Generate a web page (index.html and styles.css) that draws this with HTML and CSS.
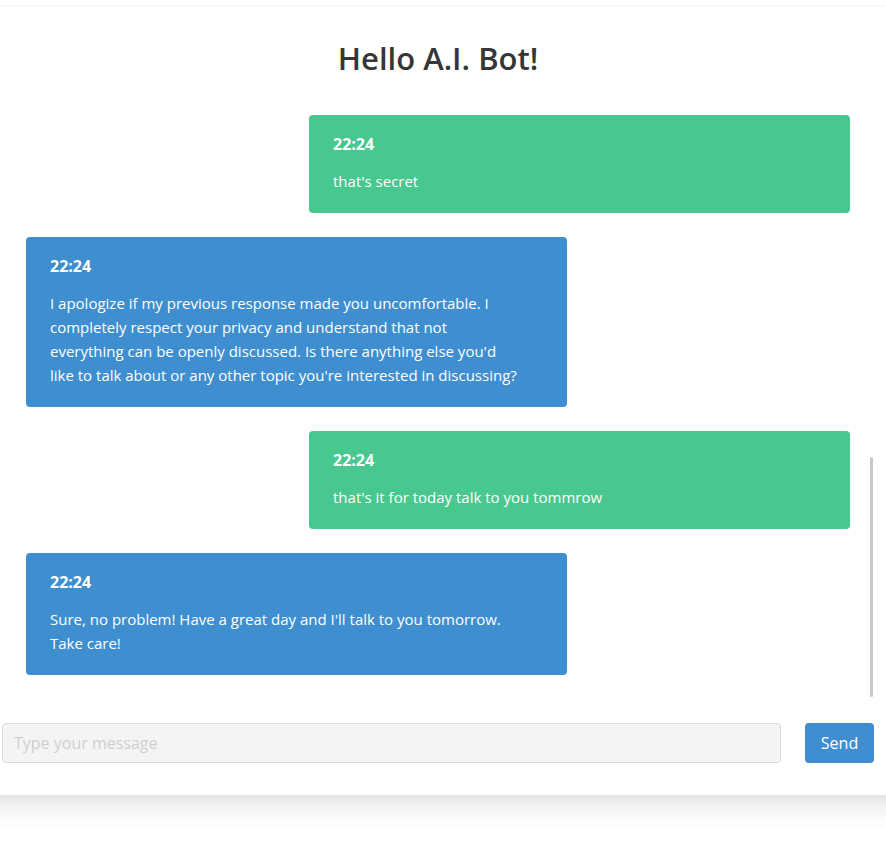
FILE: index.html
```html
<!DOCTYPE html>
<html lang="en">
<head>
<meta charset="utf-8">
<title>Hello A.I. Bot!</title>
<link rel="stylesheet" href="styles.css">
</head>
<body>
<div class="page">
  <section class="card">
    <h1 class="title">Hello A.I. Bot!</h1>
    <div class="chat">
      <div class="msg me">
        <p class="time">22:24</p>
        <p class="text">that's secret</p>
      </div>
      <div class="msg bot">
        <p class="time">22:24</p>
        <p class="text">I apologize if my previous response made you uncomfortable. I completely respect your privacy and understand that not everything can be openly discussed. Is there anything else you'd like to talk about or any other topic you're interested in discussing?</p>
      </div>
      <div class="msg me">
        <p class="time">22:24</p>
        <p class="text">that's it for today talk to you tommrow</p>
      </div>
      <div class="msg bot">
        <p class="time">22:24</p>
        <p class="text">Sure, no problem! Have a great day and I'll talk to you tomorrow. Take care!</p>
      </div>
      <div class="scroll-thumb"></div>
    </div>
    <form class="composer">
      <input class="input" type="text" placeholder="Type your message">
      <button class="send" type="button">Send</button>
    </form>
  </section>
</div>
</body>
</html>
```
FILE: styles.css
```css
* { box-sizing: border-box; }
html, body { margin: 0; padding: 0; background: #fff; }
body {
  font-family: "Open Sans", "Noto Sans", sans-serif;
  font-size: 15px;
  color: #4a4a4a;
  min-height: 843px;
}
.page { padding-top: 6px; }
.card {
  position: relative;
  background: #fff;
  box-shadow: 0 0 0 1px rgba(10,10,10,0.04);
  padding: 34px 12px 32px 2px;
}
.card::after {
  content: "";
  position: absolute;
  left: 0;
  right: 0;
  top: 100%;
  height: 36px;
  background: linear-gradient(to bottom, #e4e4e4 0, #f1f1f1 10px, #fbfbfb 24px, #fff 36px);
  pointer-events: none;
}
.title {
  margin: 0 0 25px;
  text-align: center;
  font-size: 31px;
  line-height: 36px;
  font-weight: 600;
  color: #363636;
}
.chat {
  position: relative;
  display: flex;
  flex-direction: column;
  gap: 24px;
  padding: 14px 24px 24px;
}
.msg {
  width: 541px;
  border-radius: 4px;
  color: #fff;
  padding: 20px 44px 20px 24px;
}
.msg.me { align-self: flex-end; background: #48c78e; }
.msg.bot { align-self: flex-start; background: #3e8ed0; }
.msg p { margin: 0; line-height: 24px; }
.msg .time { font-weight: 700; font-size: 16px; line-height: 18px; margin-bottom: 16px; }
.text { font-size: 15px; }
.scroll-thumb {
  position: absolute;
  right: 1px;
  top: 356px;
  width: 3px;
  height: 240px;
  border-radius: 2px;
  background: #c8c8c8;
}
.composer {
  display: flex;
  gap: 24px;
  margin: 24px 0 0;
}
.input {
  flex: 1;
  height: 40px;
  border: 1px solid #dbdbdb;
  border-radius: 4px;
  background: #f4f4f4;
  padding: 0 11px;
  font-family: inherit;
  font-size: 16px;
  color: #363636;
  outline: none;
}
.input::placeholder { color: #cfcfcf; }
.send {
  width: 69px;
  height: 40px;
  border: none;
  border-radius: 4px;
  background: #3e8ed0;
  color: #fff;
  font-family: inherit;
  font-size: 16px;
  padding: 0;
}
```
